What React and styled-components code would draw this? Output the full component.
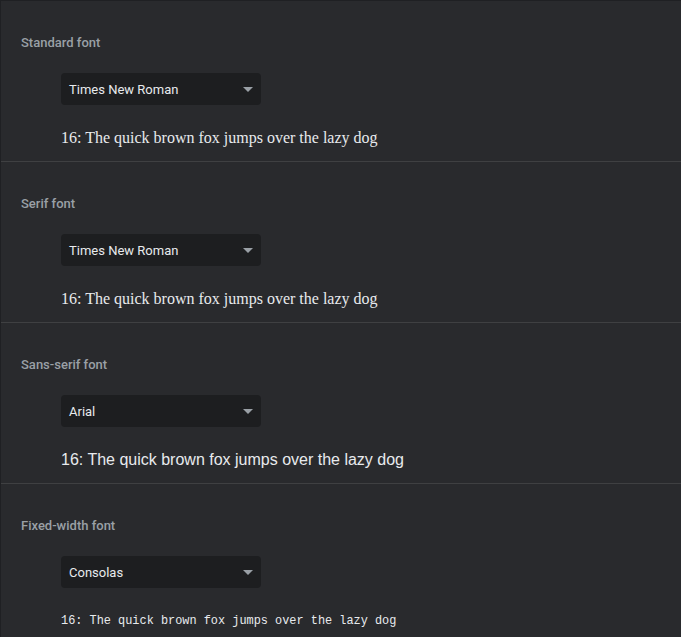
import React from 'react';
import styled, { createGlobalStyle } from 'styled-components';

const GlobalStyle = createGlobalStyle`
  html, body {
    margin: 0;
    background: #292a2d;
  }
`

const Page = styled.div`
  min-height: 637px;
  box-sizing: border-box;
  background: #292a2d;
  border-top: 1px solid #1f2023;
  border-left: 1px solid #1f2023;
  font-family: Roboto, "Liberation Sans", sans-serif;
`

const Section = styled.section`
  display: flex;
  flex-direction: column;
  height: 161px;
  box-sizing: border-box;
  padding: 32px 0 0 20px;
  border-bottom: ${props => props.last ? 'none' : '1px solid #3f4042'};
`

const Label = styled.div`
  height: 20px;
  line-height: 20px;
  font-size: 13px;
  font-weight: 500;
  color: #9aa0a6;
`

const Body = styled.div`
  display: flex;
  flex-direction: column;
  padding: 20px 0 0 40px;
`

const Select = styled.div`
  display: flex;
  align-items: center;
  justify-content: space-between;
  width: 200px;
  height: 32px;
  box-sizing: border-box;
  padding: 0 8px;
  border-radius: 4px;
  background: #1d1e20;
  color: #e8eaed;
  font-size: 13px;
`

const Caret = styled.span`
  width: 0;
  height: 0;
  border-left: 5px solid transparent;
  border-right: 5px solid transparent;
  border-top: 5px solid #9aa0a6;
`

const Preview = styled.div`
  margin-top: 23px;
  height: 20px;
  line-height: 20px;
  color: #e8eaed;
  white-space: nowrap;
  font-family: ${props => props.face};
  font-size: ${props => props.size}px;
`

const fonts = [
  { label: 'Standard font', name: 'Times New Roman', face: '"Liberation Serif", serif', size: 16 },
  { label: 'Serif font', name: 'Times New Roman', face: '"Liberation Serif", serif', size: 16 },
  { label: 'Sans-serif font', name: 'Arial', face: '"Liberation Sans", sans-serif', size: 16 },
  { label: 'Fixed-width font', name: 'Consolas', face: '"Liberation Mono", monospace', size: 11.9 },
]

const App = () => (
  <Page>
    <GlobalStyle />
    {fonts.map((f, i) => (
      <Section key={i} last={i === fonts.length - 1}>
        <Label>{f.label}</Label>
        <Body>
          <Select>
            <span>{f.name}</span>
            <Caret />
          </Select>
          <Preview face={f.face} size={f.size}>
            16: The quick brown fox jumps over the lazy dog
          </Preview>
        </Body>
      </Section>
    ))}
  </Page>
)

export default App;
